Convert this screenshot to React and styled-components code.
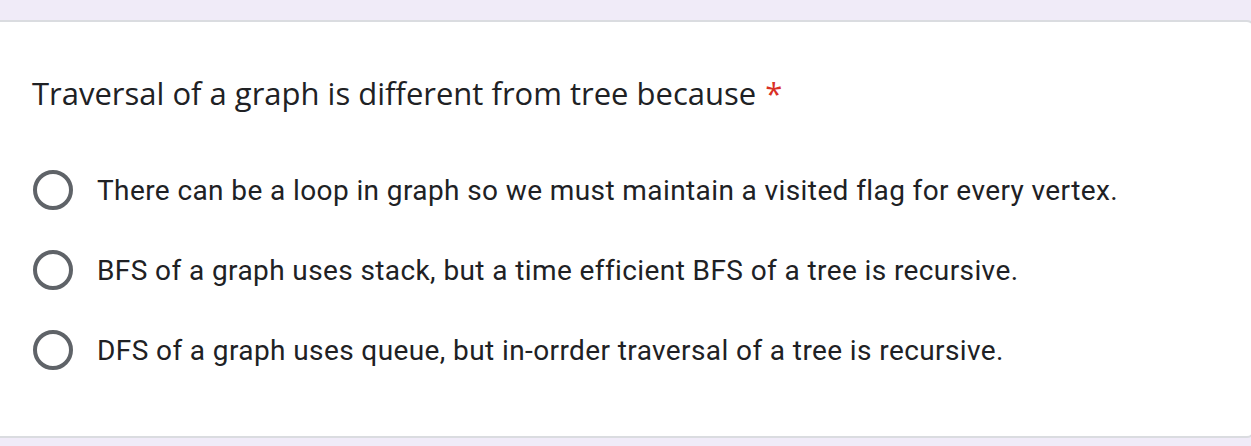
import React from "react";
import styled, { createGlobalStyle } from "styled-components";

const Global = createGlobalStyle`
  html, body { margin: 0; padding: 0; background: #f0ebf8; }
  body { overflow: hidden; }
`;

const Page = styled.div`
  width: 1251px;
  height: 446px;
  padding-top: 20px;
  box-sizing: border-box;
  overflow: hidden;
`;

const Card = styled.div`
  margin-left: -40px;
  width: 1295px;
  box-sizing: border-box;
  background: #fff;
  border: 2px solid #dadce0;
  border-radius: 8px;
  padding: 50px 0 46px 70px;
  display: flex;
  flex-direction: column;
`;

const Title = styled.div`
  font-family: "Open Sans", "Lato", sans-serif;
  font-size: 31px;
  line-height: 42px;
  color: #202124;
`;

const Required = styled.span`
  color: #d93025;
  margin-left: 9px;
`;

const Options = styled.div`
  margin-top: 36px;
  margin-left: 1px;
  display: flex;
  flex-direction: column;
`;

const Row = styled.label`
  height: 80px;
  display: flex;
  align-items: center;
  gap: 24px;
`;

const Radio = styled.span`
  width: 40px;
  height: 40px;
  box-sizing: border-box;
  border: 4px solid #5f6368;
  border-radius: 50%;
  flex: none;
`;

const OptionText = styled.span`
  font-family: Roboto, "Liberation Sans", sans-serif;
  font-size: 28px;
  color: #202124;
  letter-spacing: 0.4px;
`;

const options = [
  "There can be a loop in graph so we must maintain a visited flag for every vertex.",
  "BFS of a graph uses stack, but a time efficient BFS of a tree is recursive.",
  "DFS of a graph uses queue, but in-orrder traversal of a tree is recursive.",
];

export default function App() {
  return (
    <Page>
      <Global />
      <Card>
        <Title>
          Traversal of a graph is different from tree because
          <Required>*</Required>
        </Title>
        <Options>
          {options.map((o) => (
            <Row key={o}>
              <Radio />
              <OptionText>{o}</OptionText>
            </Row>
          ))}
        </Options>
      </Card>
    </Page>
  );
}
